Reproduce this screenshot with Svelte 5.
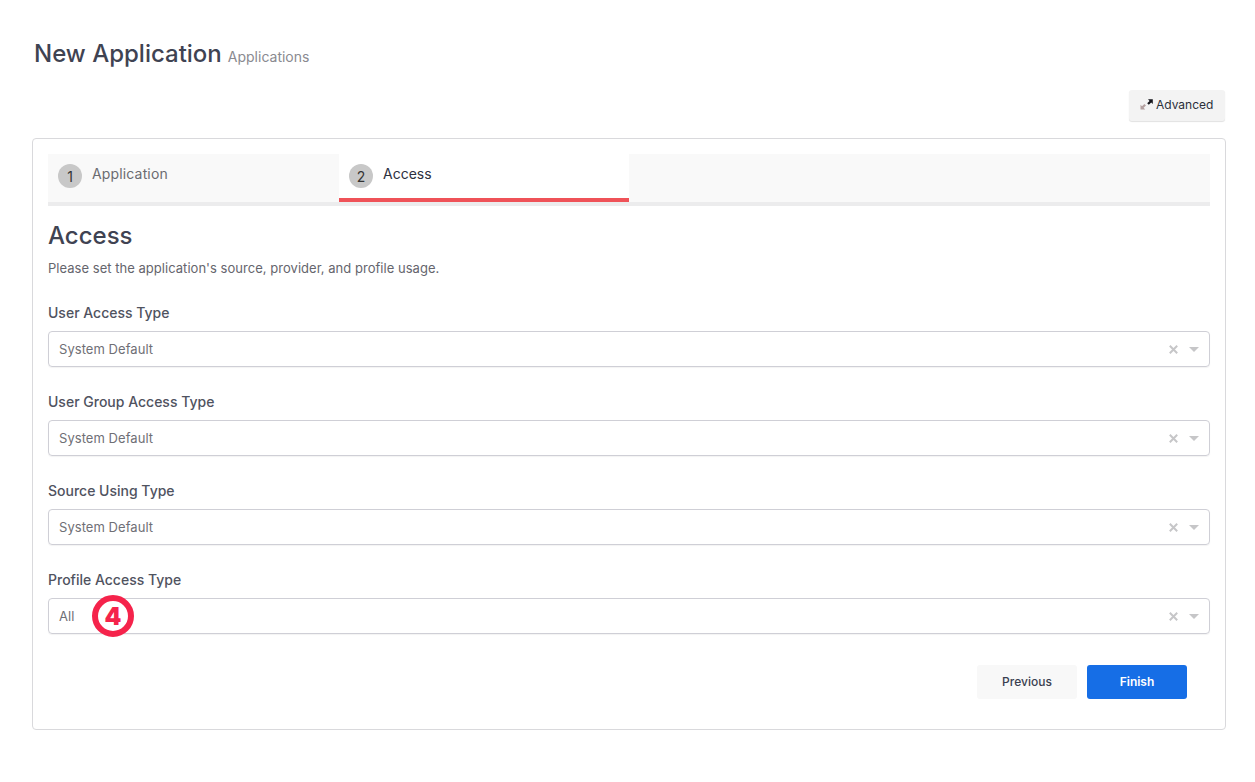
<script>
  const fields = [
    { label: "User Access Type", value: "System Default" },
    { label: "User Group Access Type", value: "System Default" },
    { label: "Source Using Type", value: "System Default" },
    { label: "Profile Access Type", value: "All" }
  ];
</script>

<div class="page">
  <header class="pageHeader">
    <h1>New Application</h1>
    <span class="crumb">Applications</span>
  </header>

  <div class="toolbar">
    <button class="advanced">
      <svg width="13" height="11" viewBox="0 0 13 11" aria-hidden="true">
        <path d="M0.5 10.5 L0.5 5.8 L2 7.2 L4.4 5 L6 6.6 L3.6 8.8 L5.2 10.5 Z" fill="#b3a0a0" />
        <path d="M12.8 0.2 L12.8 5 L11.2 3.5 L8.8 5.8 L7.2 4.2 L9.6 1.9 L8 0.2 Z" fill="#16161c" />
      </svg>
      Advanced
    </button>
  </div>

  <section class="card">
    <div class="tabs">
      <div class="tab">
        <span class="step">1</span>
        <span class="tabLabel">Application</span>
      </div>
      <div class="tab active">
        <span class="step">2</span>
        <span class="tabLabel">Access</span>
      </div>
    </div>

    <h2>Access</h2>
    <p class="description">Please set the application's source, provider, and profile usage.</p>

    {#each fields as field}
      <div class="field">
        <div class="fieldLabel">{field.label}</div>
        <div class="select">
          <span class="selectValue">{field.value}</span>
          <svg class="clear" width="9" height="9" viewBox="0 0 9 9" aria-hidden="true">
            <path d="M0.8 0.8 L8.2 8.2 M8.2 0.8 L0.8 8.2" stroke="#c6c6c8" stroke-width="2" fill="none" />
          </svg>
          <span class="caret"></span>
        </div>
      </div>
    {/each}

    <div class="actions">
      <button class="btn previous">Previous</button>
      <button class="btn finish">Finish</button>
    </div>
  </section>

  <div class="marker">4</div>
</div>

<style>
  :global(body) {
    background: #fff;
  }

  .page {
    position: relative;
    box-sizing: border-box;
    height: 782px;
    padding: 38px 29px 0 32px;
    font-family: Inter, "Liberation Sans", sans-serif;
    color: #3f4254;
  }

  .pageHeader {
    display: flex;
    align-items: baseline;
    gap: 6px;
    padding-left: 2px;
    height: 32px;
  }

  h1 {
    margin: 0;
    font-size: 24px;
    font-weight: 500;
    line-height: 32px;
    color: #3f4352;
  }

  .crumb {
    font-size: 14px;
    color: #8a8a90;
  }

  .toolbar {
    display: flex;
    justify-content: flex-end;
    margin-top: 20px;
    padding-right: 1px;
    height: 31px;
  }

  .advanced {
    display: flex;
    align-items: center;
    gap: 3px;
    box-sizing: border-box;
    width: 96px;
    height: 31px;
    padding: 0 0 3px 11px;
    border: none;
    border-radius: 3px;
    background: #f3f3f3;
    box-shadow: 0 1px 1px rgba(0, 0, 0, 0.12);
    font-family: inherit;
    font-size: 12px;
    color: #2b2f3a;
  }

  .card {
    box-sizing: border-box;
    height: 592px;
    margin-top: 17px;
    padding: 15px;
    border: 1px solid #d9d9dc;
    border-radius: 4px;
  }

  .tabs {
    display: flex;
    height: 48px;
    background: #f9f9f9;
    border-bottom: 4px solid #ececed;
  }

  .tab {
    box-sizing: border-box;
    display: flex;
    align-items: flex-start;
    width: 291px;
    height: 48px;
    padding: 10px 0 0 10px;
  }

  .tab.active {
    width: 290px;
    background: #fff;
    border-bottom: 4px solid #ef5258;
  }

  .step {
    display: flex;
    align-items: center;
    justify-content: center;
    width: 24px;
    height: 24px;
    border-radius: 50%;
    background: #c8c8c8;
    font-size: 14px;
    color: #333;
  }

  .tabLabel {
    margin-left: 10px;
    font-size: 14px;
    line-height: 20px;
    letter-spacing: 0.15px;
    color: #6b6b70;
  }

  .active .tabLabel {
    letter-spacing: 0;
    color: #2d3040;
  }

  h2 {
    margin: 16px 0 0;
    font-size: 24px;
    font-weight: 500;
    line-height: 28px;
    color: #3f4352;
  }

  .description {
    margin: 9px 0 0;
    font-size: 13px;
    line-height: 18px;
    letter-spacing: 0.03px;
    color: #65656d;
  }

  .field {
    margin-top: 26px;
    height: 63px;
  }

  .description + .field {
    margin-top: 27px;
  }

  .fieldLabel {
    font-size: 14px;
    line-height: 18px;
    font-weight: 500;
    color: #50535f;
    height: 18px;
    margin-bottom: 9px;
  }

  .select {
    display: flex;
    align-items: center;
    box-sizing: border-box;
    height: 36px;
    padding: 0 10px;
    border: 1px solid #cfcfd6;
    border-radius: 4px;
    box-shadow: 0 1px 1px rgba(0, 0, 0, 0.05);
  }

  .selectValue {
    flex: 1;
    font-size: 13px;
    letter-spacing: 0.05px;
    color: #6f6f76;
  }

  .clear {
    margin-right: 11px;
  }

  .caret {
    width: 0;
    height: 0;
    border-left: 5px solid transparent;
    border-right: 5px solid transparent;
    border-top: 5px solid #c6c6c8;
  }

  .actions {
    display: flex;
    justify-content: flex-end;
    gap: 10px;
    margin-top: 31px;
    padding-right: 23px;
  }

  .btn {
    width: 100px;
    height: 34px;
    padding: 0 0 1px;
    border: none;
    border-radius: 3px;
    font-family: inherit;
    font-size: 12px;
  }

  .previous {
    background: #f8f8f8;
    font-weight: 500;
    color: #3a3f50;
  }

  .finish {
    background: #166ee6;
    font-weight: 600;
    color: #fff;
  }

  .marker {
    position: absolute;
    left: 92px;
    top: 595px;
    box-sizing: border-box;
    width: 42px;
    height: 42px;
    border: 6px solid #f5234b;
    border-radius: 50%;
    background: #fff;
    display: flex;
    align-items: center;
    justify-content: center;
    font-size: 24px;
    font-weight: 900;
    color: #f5234b;
  }
</style>
